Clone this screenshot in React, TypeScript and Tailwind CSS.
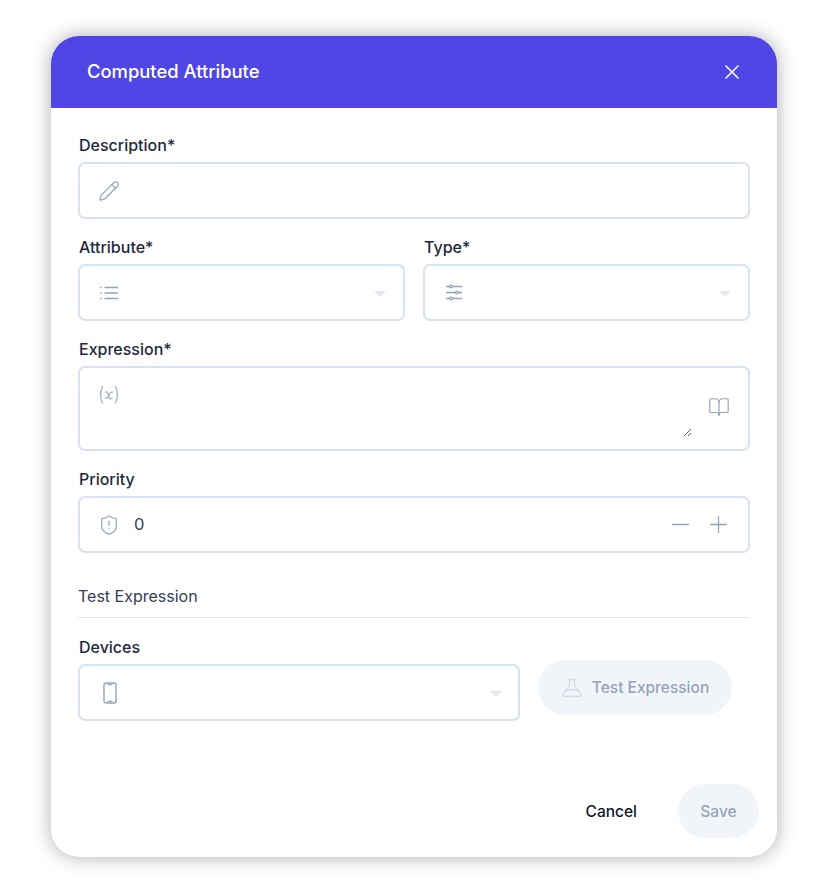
import React from "react";
import { X, Pencil, BookOpen, Minus, Plus, ShieldAlert } from "lucide-react";

const fieldBox = "flex items-center h-[57px] rounded-[7px] border-2 border-[#d8e1ef] bg-white";

const Caret = () => (
  <span className="ml-auto mr-[17px] w-0 h-0 border-x-[6px] border-x-transparent border-t-[6px] border-t-[#e5e9f0] mt-0.5" />
);

const Label = ({ children }: { children: React.ReactNode }) => (
  <label className="block h-[18px] mb-2 pl-px text-[16px] leading-[18px] font-medium text-[#1e293b]">{children}</label>
);

const ListIcon = () => (
  <svg width="20" height="20" viewBox="0 0 20 20" fill="none" stroke="#94a3b8" strokeWidth="1.300">
    <path d="M5.500 4.500H19M5.500 10H19M5.500 15.500H19" />
    <path d="M1 4.500h1.500M1 10h1.500M1 15.500h1.500" strokeWidth="1.600" />
  </svg>
);

const SlidersIcon = () => (
  <svg width="20" height="20" viewBox="0 0 20 20" fill="none" stroke="#94a3b8" strokeWidth="1.300">
    <path d="M2 3.500h3.600M8.400 3.500H18M2 9.500h9.600M14.400 9.500H18M2 15.500h3.600M8.400 15.500H18" />
    <circle cx="7" cy="3.500" r="1.400" />
    <circle cx="13" cy="9.500" r="1.400" />
    <circle cx="7" cy="15.500" r="1.400" />
  </svg>
);

const VariableIcon = () => (
  <svg width="22" height="22" viewBox="0 0 22 22" fill="none" stroke="#a3b1c6" strokeWidth="1.300" strokeLinecap="round">
    <path d="M4.500 2.500C2 7 2 14 4.500 19M17.500 2.500C20 7 20 14 17.500 19" />
    <path d="M7.500 8c1.600-.6 2.200.2 2.800 2.600l.7 2.600c.5 1.700 1.400 2 3 1.200M14.500 8.200c-1.400-.5-2.300.6-3 1.900l-1.300 2.600c-.7 1.400-1.600 1.800-2.900 1.200" />
  </svg>
);

const PhoneIcon = () => (
  <svg width="14" height="22" viewBox="0 0 14 22" fill="none" stroke="#94a3b8" strokeWidth="1.400" strokeLinecap="round">
    <rect x="1" y="1" width="12" height="20" rx="2" />
    <path d="M5 2.600h4M5 19.400h4" />
  </svg>
);

const FlaskIcon = () => (
  <svg width="22" height="22" viewBox="0 0 22 22" fill="none" stroke="#d3dbe6" strokeWidth="1.300" strokeLinejoin="round" strokeLinecap="round">
    <path d="M7.500 2.500h7M8.500 2.500v6L2 16.800c-1 1.500-.3 2.700 1.500 2.700h15c1.800 0 2.500-1.200 1.500-2.700L13.500 8.500v-6" />
    <path d="M5.500 13h11" />
  </svg>
);

export default function App() {
  return (
    <div className="min-h-[892px] bg-white pt-9 pl-[51px] font-['Inter',sans-serif]">
      <div className="w-[726px] h-[821px] rounded-[28px] bg-white overflow-hidden shadow-[0_0_20px_rgba(0,0,0,0.32)] flex flex-col">
        {/* Header */}
        <div className="h-[72px] shrink-0 bg-[#4f46e5] flex items-center justify-between pl-9 pr-[33px]">
          <span className="pb-px text-[18.4px] font-medium text-white">Computed Attribute</span>
          <X className="w-6 h-6 text-white" strokeWidth={1.5} />
        </div>

        {/* Form */}
        <div className="flex-1 flex flex-col pt-7 px-[27px]">
          <div className="mb-[19px]">
            <Label>Description*</Label>
            <div className={fieldBox}>
              <Pencil className="ml-[18px] w-[22px] h-[22px] text-[#94a3b8]" strokeWidth={1.300} />
            </div>
          </div>

          <div className="flex gap-[18px] mb-[19px]">
            <div className="flex-1">
              <Label>Attribute*</Label>
              <div className={fieldBox}>
                <span className="ml-[19px] flex"><ListIcon /></span>
                <Caret />
              </div>
            </div>
            <div className="flex-1">
              <Label>Type*</Label>
              <div className={fieldBox}>
                <span className="ml-[19px] flex"><SlidersIcon /></span>
                <Caret />
              </div>
            </div>
          </div>

          <div className="mb-[19px]">
            <Label>Expression*</Label>
            <div className="relative h-[85px] rounded-[7px] border-2 border-[#d8e1ef] bg-white">
              <div className="absolute left-[18px] top-[16px]"><VariableIcon /></div>
              <BookOpen className="absolute right-[18px] top-[28px] w-[22px] h-[22px] text-[#94a3b8]" strokeWidth={1.300} />
              <textarea className="absolute left-0 top-0 w-[612px] h-[69px] outline-none bg-transparent resize" />
            </div>
          </div>

          <div className="mb-[34px]">
            <Label>Priority</Label>
            <div className={fieldBox}>
              <ShieldAlert className="ml-[18px] w-[22px] h-[22px] text-[#94a3b8]" strokeWidth={1.300} />
              <span className="ml-[14px] pb-px text-[16.500px] text-[#334155]">0</span>
              <Minus className="ml-auto w-[27px] h-[27px] text-[#94a3b8]" strokeWidth={1.200} />
              <Plus className="ml-[11px] mr-4 w-[27px] h-[27px] text-[#94a3b8]" strokeWidth={1.200} />
            </div>
          </div>

          <div className="h-[31px] border-b border-[#e2e8f0] text-[16px] leading-[18px] text-[#334155]">
            Test Expression
          </div>

          <div className="mt-5 flex items-start">
            <div className="w-[442px]">
              <Label>Devices</Label>
              <div className={fieldBox}>
                <span className="ml-[23px] flex"><PhoneIcon /></span>
                <span className="ml-auto mr-4 w-0 h-0 border-x-[6px] border-x-transparent border-t-[6px] border-t-[#e5e9f0] mt-0.5" />
              </div>
            </div>
            <button className="ml-[18px] mt-[22px] w-[194px] h-[55px] rounded-full bg-[#f1f5f9] flex items-center justify-center gap-[9px] text-[15.500px] font-medium text-[#94a3b8]">
              <FlaskIcon />
              Test Expression
            </button>
          </div>

          <div className="mt-[63px] flex items-center justify-end -mr-[9px]">
            <button className="mr-[41px] pt-0.5 text-[15.500px] font-medium text-[#0f172a]">Cancel</button>
            <button className="w-[81px] h-[54px] pt-0.5 rounded-full bg-[#f1f5f9] text-[15.500px] font-medium text-[#94a3b8]">Save</button>
          </div>
        </div>
      </div>
    </div>
  );
}
